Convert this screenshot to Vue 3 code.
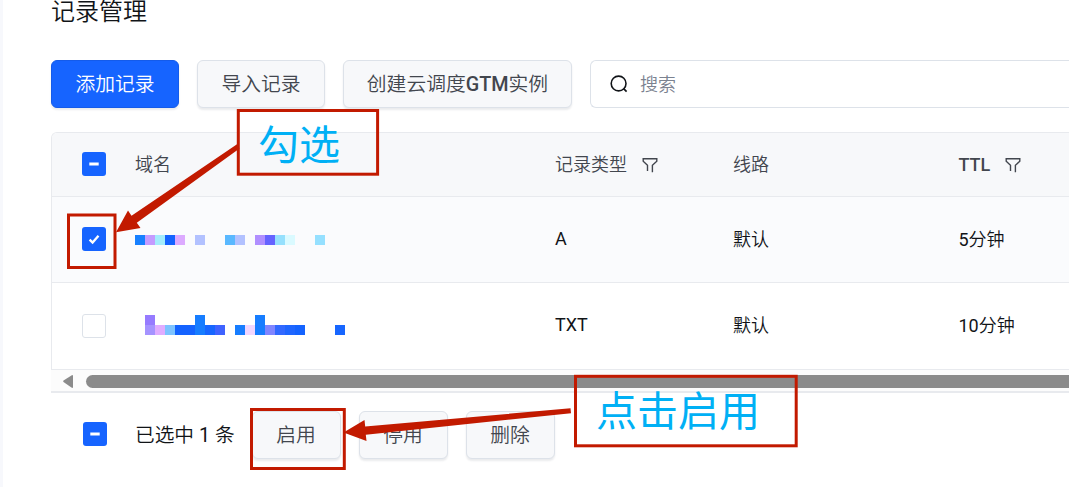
<script setup>
const headers = [
  { text: '域名' },
  { text: '记录类型', filter: true },
  { text: '线路' },
  { text: 'TTL', filter: true, latin: true },
]

// Mosaic blocks: [column, row, colour] on a 10px grid
const rows = [
  {
    checked: true,
    type: 'A',
    line: '默认',
    ttl: '5分钟',
    blocks: [
      [0, 1, '#1780ff'], [1, 1, '#c49bff'], [2, 1, '#a3ecfc'], [3, 1, '#1463ff'],
      [4, 1, '#dcaaff'], [6, 1, '#b2c1ff'], [9, 1, '#59b8ff'], [10, 1, '#b2c1ff'],
      [12, 1, '#b08fff'], [13, 1, '#6563ff'], [14, 1, '#95e0fd'], [15, 1, '#dafaff'],
      [18, 1, '#95e0ff'],
    ],
  },
  {
    checked: false,
    type: 'TXT',
    line: '默认',
    ttl: '10分钟',
    blocks: [
      [1, 0, '#967bff'], [6, 0, '#177dff'], [12, 0, '#177dff'],
      [1, 1, '#a593ff'], [2, 1, '#e0acff'], [3, 1, '#7dc3ff'], [4, 1, '#1463ff'],
      [5, 1, '#1463ff'], [6, 1, '#177dff'], [7, 1, '#1766ff'], [8, 1, '#3f63ff'],
      [10, 1, '#177dff'], [11, 1, '#f0d6ff'], [12, 1, '#177dff'], [13, 1, '#8085ff'],
      [14, 1, '#3269ff'], [15, 1, '#1f66ff'], [16, 1, '#1463ff'], [20, 1, '#1766ff'],
    ],
  },
]
</script>

<template>
  <div class="page">
    <h1 class="title">记录管理</h1>

    <div class="toolbar">
      <button class="btn primary">添加记录</button>
      <button class="btn">导入记录</button>
      <button class="btn wide">创建云调度<b>GTM</b>实例</button>
      <div class="search">
        <svg width="20" height="20" viewBox="0 0 20 20" fill="none" stroke="#111418" stroke-width="1.6">
          <circle cx="9.6" cy="9.5" r="7.4" />
          <path d="M14.6 14.6L17.6 17.6" />
        </svg>
        <span>搜索</span>
      </div>
    </div>

    <div class="table">
      <div class="row head">
        <div class="pick"><i class="check on"><svg viewBox="0 0 24 24"><path d="M7.3 12H16.7" stroke-width="3" /></svg></i></div>
        <div v-for="h in headers" :key="h.text" class="cell">
          <span :class="h.latin ? 'latin' : 'label'">{{ h.text }}</span>
          <svg v-if="h.filter" class="filter" width="16" height="16" viewBox="0 0 16 16">
            <path d="M5.5 14V8.3L1.2 4.2V1.7H14.8V4.2L10.4 8.3V15.2" />
          </svg>
        </div>
      </div>
      <div v-for="r in rows" :key="r.type" class="row" :class="{ selected: r.checked }">
        <div class="pick">
          <i class="check" :class="{ on: r.checked }">
            <svg v-if="r.checked" viewBox="0 0 24 24"><path d="M7.6 12.6L10.6 15.6L16.5 8.7" stroke-width="2.3" /></svg>
          </i>
        </div>
        <div class="cell">
          <svg class="mosaic" width="210" height="20" shape-rendering="crispEdges">
            <rect v-for="(b, i) in r.blocks" :key="i" :x="b[0] * 10" :y="b[1] * 10" width="10" height="10" :fill="b[2]" />
          </svg>
        </div>
        <div class="cell"><span class="value">{{ r.type }}</span></div>
        <div class="cell"><span class="label">{{ r.line }}</span></div>
        <div class="cell"><span class="label">{{ r.ttl }}</span></div>
      </div>
    </div>

    <div class="scroll">
      <svg width="12" height="15" viewBox="0 0 12 15"><path d="M9.8 1.2L1.5 6.6Q0.8 7.2 1.5 7.9L9.8 13.8Q11 14.3 11 13V2Q11 0.7 9.8 1.2Z" fill="#8b8b8b" /></svg>
      <div class="thumb"></div>
    </div>

    <div class="footer">
      <i class="check on"><svg viewBox="0 0 24 24"><path d="M7.3 12H16.7" stroke-width="3" /></svg></i>
      <span class="count">已选中 1 条</span>
      <button class="btn small">启用</button>
      <button class="btn small">停用</button>
      <button class="btn small">删除</button>
    </div>

    <svg class="marks" width="1069" height="487" viewBox="0 0 1069 487">
      <g fill="none" stroke="#c21a00" stroke-width="3">
        <rect x="238.3" y="110.5" width="139.3" height="63.7" />
        <rect x="68.5" y="215" width="46.5" height="52.5" />
        <rect x="251.5" y="409.5" width="92.8" height="59" />
        <rect x="575.5" y="376.3" width="220.7" height="69.5" />
      </g>
      <g fill="#c21a00">
        <path d="M237 144.2L131.5 215.8L128 210.5L116 232.2L140.5 228L136.8 222.8L239.5 148.5Z" />
        <path d="M570.5 408.3L365.2 426.5L364.5 420L343.5 432.5L366.5 441L365.8 434.8L571 413.2Z" />
      </g>
    </svg>
    <div class="note first">勾选</div>
    <div class="note second">点击启用</div>
  </div>
</template>

<style>
body {
  background: #fff;
}
</style>

<style scoped>
.page {
  position: relative;
  box-sizing: border-box;
  width: 1069px;
  height: 487px;
  overflow: hidden;
  padding-left: 48px;
  border-left: 3px solid #f7f8fc;
  background: #fff;
  color: #111418;
  font-family: Roboto, "Noto Sans CJK SC DemiLight", "Noto Sans CJK SC", sans-serif;
  font-size: 18px;
  font-weight: 400;
}
.title {
  margin: 0;
  height: 30px;
  line-height: 24px;
  font-size: 24px;
  font-weight: 400;
}
.toolbar {
  display: flex;
  gap: 18px;
  margin-top: 30px;
}
.btn {
  box-sizing: border-box;
  flex: none;
  width: 128px;
  height: 48px;
  padding: 0 0 3px;
  border: 1px solid #dde2e9;
  border-radius: 6px;
  background: #f7f8fa;
  box-shadow: 0 2px 2px rgba(20, 30, 50, 0.09);
  color: #42464e;
  font-family: inherit;
  font-size: 19.8px;
  white-space: nowrap;
}
.btn b {
  font-weight: 500;
}
.btn.primary {
  border-color: #145bea;
  background: #1664ff;
  color: #fff;
}
.btn.wide {
  width: 229px;
}
.btn.small {
  width: 89px;
  padding-right: 1px;
}
.search {
  box-sizing: border-box;
  display: flex;
  flex: 1;
  align-items: center;
  gap: 11px;
  height: 48px;
  padding-left: 18px;
  border: 1px solid #dde2e9;
  border-right: 0;
  border-radius: 6px 0 0 6px;
  color: #7b8290;
}
.search span {
  padding-bottom: 3px;
}
.table {
  box-sizing: border-box;
  margin-top: 24px;
  border: 1px solid #e8eaee;
  border-width: 1px 0 0 1px;
  border-radius: 6px 0 0 0;
  overflow: hidden;
}
.row {
  box-sizing: border-box;
  display: grid;
  grid-template-columns: 83px 420px 178px 225.5px 1fr;
  align-items: center;
  height: 87px;
  border-bottom: 1px solid #e8eaee;
}
.row.head {
  height: 64px;
  background: #f7f8fa;
  color: #42464e;
}
.row.selected {
  height: 86px;
  background: #fafbfd;
}
.pick {
  padding-left: 30px;
}
.head .pick,
.selected .pick {
  padding-bottom: 2px;
}
.cell {
  display: flex;
  align-items: center;
}
.label {
  padding-bottom: 4px;
}
.value {
  padding-bottom: 3px;
}
.latin {
  padding-bottom: 1px;
  font-weight: 500;
}
.filter {
  margin-left: 15px;
  fill: none;
  stroke: #42464e;
  stroke-width: 1.4;
}
.mosaic {
  margin-top: -3px;
}
.selected .mosaic {
  margin-top: -9px;
}
.check {
  box-sizing: border-box;
  display: block;
  flex: none;
  width: 24px;
  height: 24px;
  border: 1px solid #dde2e9;
  border-radius: 3px;
  background: #fff;
}
.check.on {
  border: 0;
  background: #1664ff;
}
.check svg {
  display: block;
  fill: none;
  stroke: #fff;
}
.scroll {
  box-sizing: border-box;
  display: flex;
  align-items: center;
  height: 23px;
  padding: 2px 0 0 11px;
  border-bottom: 2px solid #e8eaee;
  background: #fcfcfc;
}
.thumb {
  flex: 1;
  height: 13px;
  margin-left: 12px;
  border-radius: 7px 0 0 7px;
  background: #8b8b8b;
}
.footer {
  display: flex;
  align-items: center;
  gap: 18px;
  margin-top: 18px;
  padding-left: 32px;
}
.footer .check {
  margin-bottom: 2px;
}
.count {
  width: 99px;
  margin-left: 10px;
  padding-bottom: 4px;
  font-size: 19.7px;
  white-space: nowrap;
}
.marks {
  position: absolute;
  top: 0;
  left: -3px;
}
.note {
  position: absolute;
  color: #00b0f5;
  font-family: "Noto Sans CJK SC", sans-serif;
  font-size: 41px;
  line-height: 48px;
  white-space: nowrap;
}
.note.first {
  top: 118px;
  left: 255px;
}
.note.second {
  top: 384px;
  left: 593px;
}
</style>
